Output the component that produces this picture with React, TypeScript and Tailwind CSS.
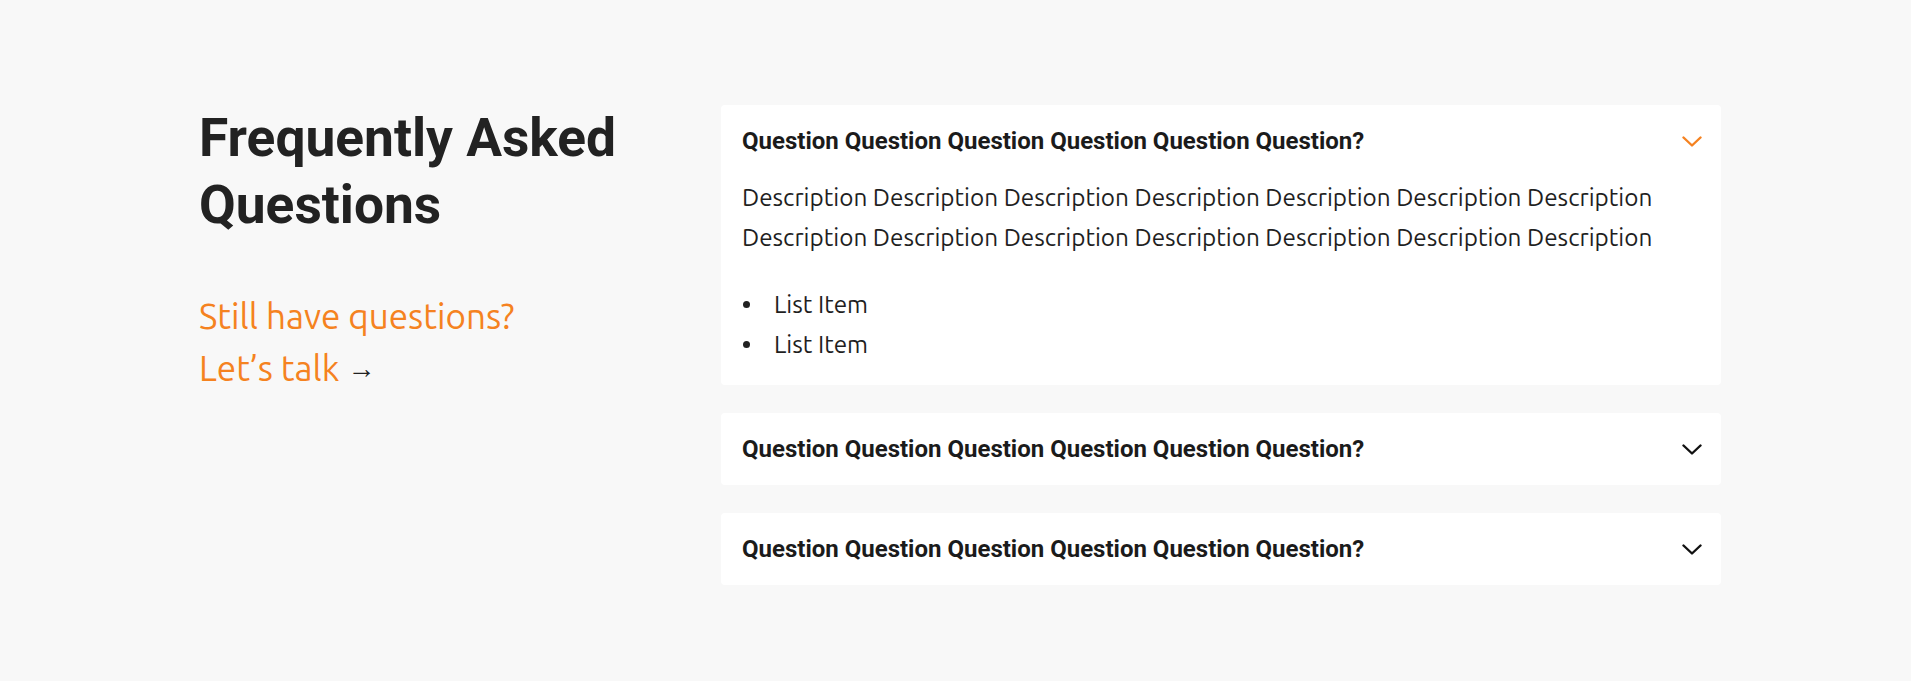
import { useState } from 'react';

const faqs = [
  {
    q: 'Question Question Question Question Question Question?',
    body: 'Description Description Description Description Description Description Description Description Description Description Description Description Description Description',
    items: ['List Item', 'List Item'],
  },
  { q: 'Question Question Question Question Question Question?', body: '', items: [] },
  { q: 'Question Question Question Question Question Question?', body: '', items: [] },
];

const Chevron = ({ className }: { className: string }) => (
  <svg viewBox="0 0 20 11" className={className} fill="none" stroke="currentColor" strokeWidth="2.4" strokeLinecap="round" strokeLinejoin="round">
    <path d="M1.5 1.5 10 9.5l8.5-8" />
  </svg>
);

const FaqItem = ({ q, body, items, open, onToggle }: { q: string; body: string; items: string[]; open: boolean; onToggle: () => void }) => (
  <div className="bg-white rounded">
    <button onClick={onToggle} className="w-full flex items-center justify-between px-[21px] py-[22px] text-left">
      <span className="font-['Roboto',sans-serif] font-bold text-[24px] leading-[28px] text-[#1b1b1b]">{q}</span>
      <Chevron className={`w-[20px] h-[11px] mr-[-2px] ${open ? 'text-[#f58220]' : 'text-[#111]'}`} />
    </button>
    {open && (
      <div className="px-[21px] pb-[21px] font-['Ubuntu','Noto_Sans',sans-serif] text-[24.3px] leading-[40px] text-[#1f1f1f]">
        <p className="max-w-[930px]">{body}</p>
        <ul className="mt-[27px]">
          {items.map((it, i) => (
            <li key={i} className="flex items-center">
              <span className="w-[7px] h-[7px] rounded-full bg-[#222] ml-[1px] mr-[24px]" />
              {it}
            </li>
          ))}
        </ul>
      </div>
    )}
  </div>
);

export default function App() {
  const [open, setOpen] = useState(0);
  return (
    <div className="min-h-[681px] bg-[#f8f8f8] pl-[199px] pt-[105px]">
      <div className="flex items-start w-[1522px]">
        <div className="w-[522px] shrink-0">
          <h2 className="font-['Roboto',sans-serif] font-bold text-[53.3px] leading-[67px] text-[#222]">Frequently Asked<br />Questions</h2>
          <div className="mt-[51px] font-['Ubuntu','Noto_Sans',sans-serif] text-[35px] leading-[52px] text-[#f58220]">
            <p>Still have questions?</p>
            <a href="#" className="block">Let’s talk <span className="text-[28px] text-[#222] align-[3px]">→</span></a>
          </div>
        </div>
        <div className="flex-1 flex flex-col gap-[28px]">
          {faqs.map((f, i) => (
            <FaqItem key={i} {...f} open={open === i} onToggle={() => setOpen(open === i ? -1 : i)} />
          ))}
        </div>
      </div>
    </div>
  );
}
